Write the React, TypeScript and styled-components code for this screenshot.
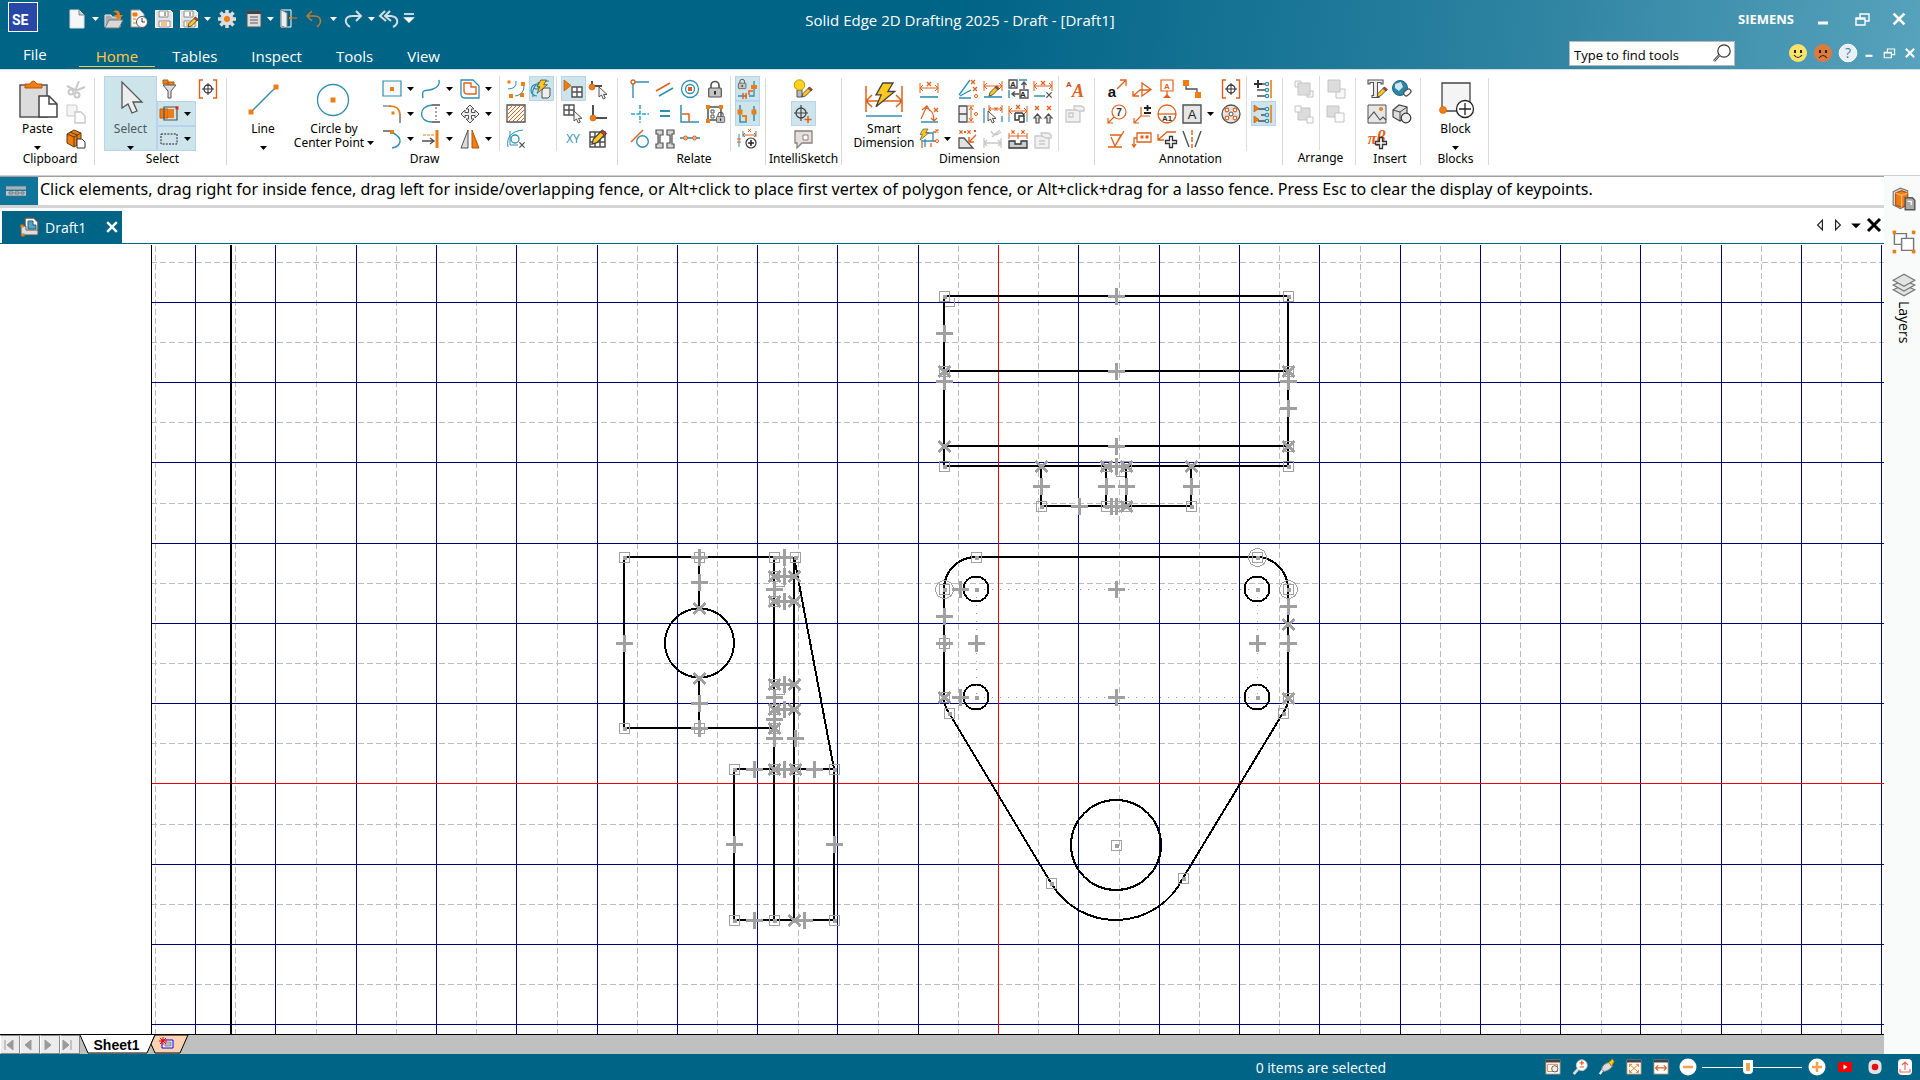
import React from "react";
import styled, { createGlobalStyle } from "styled-components";

const B = "#2f8fb3";
const O = "#e0601a";
const F = "#ee7d12";
const G = "#505050";
const L = "#c9c9c9";
const NAVY = "#00007f";
const MARK = "#a0a0a0";
const TEAL = "#006487";

const GlobalStyle = createGlobalStyle`
  * { box-sizing: border-box; }
  body { margin: 0; background: #fff; font-family: "Open Sans", "Noto Sans", sans-serif; font-size: 12px; color: #000; }
  button, input { font: inherit; color: inherit; }
`;

/* ---------- icons, drawn on a 20 x 20 field ---------- */

const dims = (y: number, x1 = 1, x2 = 19) => (
  <g stroke={O} fill="none">
    <path d={`M${x1} ${y - 5}v10M${x2} ${y - 5}v10M${x1} ${y}H${x2}M${x1 + 3} ${y - 3}l-3 3 3 3M${x2 - 3} ${y - 3}l3 3-3 3`} />
  </g>
);
const ex = (x: number, y: number, c = O, r = 2) => (
  <path d={`M${x - r} ${y - r}l${2 * r} ${2 * r}M${x + r} ${y - r}l${-2 * r} ${2 * r}`} stroke={c} strokeWidth="1.3" fill="none" />
);
const sq = (x: number, y: number, s = 4, c = F) => <rect x={x - s / 2} y={y - s / 2} width={s} height={s} fill={c} />;
const dot = (x: number, y: number, r = 2.4) => <circle cx={x} cy={y} r={r} fill={F} stroke={O} strokeWidth=".7" />;
const bolt = (x: number, y: number, k = 1) => (
  <path transform={`translate(${x} ${y}) scale(${k})`} d="M4 0h6L7 5h4L0 14l3-7H0z" fill="#ffc81e" stroke="#444" strokeWidth=".8" />
);
const cursor = (x: number, y: number) => (
  <path transform={`translate(${x} ${y})`} d="M0 0v10l2.5-2 1.8 4 2-1-1.8-3.6H8z" fill="#f4f4f4" stroke={G} />
);
const pencil = (x: number, y: number) => (
  <g transform={`translate(${x} ${y})`}>
    <path d="M0 10l1-3.5L7 .5l2.5 2.5-6 6z" fill="#ffc81e" stroke="#444" strokeWidth=".9" />
    <path d="M6 1.5L7.5 0l3 2.5L9 4z" fill="#c83a2a" stroke="#444" strokeWidth=".7" />
  </g>
);
const lock = (x: number, y: number, k = 1) => (
  <g transform={`translate(${x} ${y}) scale(${k})`}>
    <path d="M3 7V4.500a4 4 0 0 1 8 0V7" fill="none" stroke={G} strokeWidth="1.6" />
    <rect x=".7" y="7" width="12.600" height="9" rx="1" fill="#c4c4c4" stroke={G} strokeWidth="1.2" />
    <path d="M7 10v3.500" stroke="#222" strokeWidth="1.8" />
  </g>
);
const plus = (x: number, y: number) => (
  <path transform={`translate(${x} ${y})`} d="M-1.500-5.500h3v4h4v3h-4v4h-3v-4h-4v-3h4z" fill="#fff" stroke="#333" strokeWidth="1.3" />
);
const letter = (x: number, y: number, s: string, size = 9, c = "#222", extra: object = {}) => (
  <text x={x} y={y} fontSize={size} fill={c} textAnchor="middle" fontFamily="Liberation Sans, sans-serif" fontWeight="bold" {...extra}>{s}</text>
);
const gridBox = (x: number, y: number, s: number) => (
  <path d={`M${x} ${y}h${s}v${s}h${-s}zM${x + s / 2} ${y}v${s}M${x} ${y + s / 2}h${s}`} fill="#fff" stroke={G} strokeWidth="1.4" />
);
const brackets = (
  <>
    <path d="M5 1H1.500v18H5M15 1h3.500v18H15" fill="none" stroke={O} strokeWidth="1.4" />
    <path d="M10 4v12M4 10h12" stroke="#333" />
    <circle cx="10" cy="10" r="4" fill="none" stroke="#333" strokeWidth="1.3" />
  </>
);
const floppy = (
  <>
    <path d="M1.500 1.500h15l2 2v15h-17z" fill="#e4e4e4" stroke="#fff" />
    <path d="M5 2h9v6H5zM5 12h11v6H5z" fill="#fff" stroke="#8a8a8a" />
    <path d="M7 14h6M7 16h6" stroke={F} /><path d="M11 3v4" stroke="#555" />
  </>
);
const face = (c: string, mouth: string) => (
  <>
    <circle cx="10" cy="10" r="9" fill={c} />
    <path d="M7 7v3M13 7v3" stroke="#222" strokeWidth="2" />
    <path d={mouth} fill="none" stroke="#222" strokeWidth="1.200" />
  </>
);

const icons: Record<string, React.ReactNode> = {
  newDoc: <><path d="M3 1h9l5 5v13H3z" fill="#f6f6f6" stroke="#ddd" /><path d="M12 1v5h5" fill="#ccc" stroke="#888" /></>,
  open: <><path d="M1 18V6h6l1 2h8v10z" fill="#aaa" stroke="#eee" /><path d="M1 19l4-8h14l-4 8z" fill="#d8d8d8" stroke="#777" /><path d="M9 3c4-3 7-1 7 3h3l-4.500 5L10 6h3c0-2-1-3-4-3z" fill={F} /></>,
  recent: <><path d="M2 1h9l4 4v13H2z" fill="#f3f3f3" stroke="#999" /><path d="M4 4h4v3H4zM4 10h3M4 14h3" fill={F} stroke={F} /><circle cx="13" cy="13" r="5.500" fill="#fff" stroke="#555" /><path d="M13 9v4h3" fill="none" stroke="#333" /></>,
  save: floppy,
  saveAs: <>{floppy}{pencil(9, 8)}</>,
  gear: <><path d="M10 1v18M1 10h18M3.500 3.500l13 13M16.500 3.500l-13 13" stroke="#ddd" strokeWidth="3.500" /><circle cx="10" cy="10" r="6.500" fill="#ddd" /><circle cx="10" cy="10" r="3" fill={F} /></>,
  windows: <><path d="M3 2h14v16H3z" fill="#ddd" stroke="#555" /><path d="M3 2h14v3H3z" fill="#444" /><path d="M6 8h8M6 11h8M6 14h8" stroke="#888" strokeWidth="1.500" /></>,
  door: <><path d="M3 1h10v17H3z" fill="none" stroke="#fff" /><path d="M3 1l6 3v15l-6-2z" fill="#eee" stroke="#888" /><path d="M19 9h-8M14 6l-3 3 3 3" stroke={F} fill="none" /></>,
  undo: <path d="M7 2L2 7l5 5M2 7h7c8 0 8 7 3 11" fill="none" stroke="#b97a35" strokeWidth="1.600" />,
  redo: <path d="M13 2l5 5-5 5M18 7h-8C1 7 1 14 7 18" fill="none" stroke="#d5dde0" strokeWidth="2" />,
  undoAll: <path d="M6 2L1 7l6 5M11 2L6 7l6 5M6 7h6c8 1 8 8 2 11" fill="none" stroke="#d5dde0" strokeWidth="2" />,
  custom: <path d="M5 5h10M6 9h8l-4 4z" fill="#fff" stroke="#fff" strokeWidth="1.500" />,

  cut: <g fill="none" stroke={L} strokeWidth="2"><path d="M9 12L13 2M9 11L1 7M9 12l10-4" /><circle cx="5" cy="13" r="2.500" /><circle cx="11" cy="16" r="2.500" /></g>,
  copy: <><path d="M1 1h9l1 1v10H1z" fill="#f4f4f4" stroke={L} /><path d="M9 8h6l4 4v7H9z" fill="#fff" stroke={L} strokeWidth="1.400" /></>,
  pasteSpecial: <><path d="M1 5l7-4 7 3v10l-7 4-7-4z" fill={F} stroke="#5a3c12" /><path d="M1 5l7 3 7-4M8 8v10M4 3l7 3v10" fill="none" stroke="#5a3c12" /><path d="M11 10h5l3 3v6h-8z" fill="#fff" stroke="#333" /></>,
  filter: <><path d="M4 1h5v4H4zM9 3h6v4H9z" fill={F} stroke="#b05c0a" /><path d="M4 6h13l-5 6v7H9v-7z" fill="#ddd" stroke="#555" /></>,
  fence: <><path d="M1 5h8v9H1z" fill={F} stroke="#c05c10" /><path d="M9 5h6v9H9z" fill={F} /><path d="M5 3h13v13H5z" fill="none" stroke={G} strokeWidth="1.200" />{sq(18, 4, 3, "#e22")}</>,
  box: <path d="M2 5h16v10H2z" fill="none" stroke="#222" strokeDasharray="2 1.200" />,
  brackets,
  rect: <><path d="M1 2h18v15H1z" fill="#f7fbfd" stroke={B} strokeWidth="1.200" />{sq(10, 10, 4)}</>,
  curve: <path d="M2 19C0 8 6 13 12 10c5-2 7-5 6-9" fill="none" stroke={B} strokeWidth="1.400" />,
  offset: <><path d="M1 1h12l6 6v12H5q-4 0-4-4z" fill="none" stroke={B} strokeWidth="1.300" /><path d="M4 4h7v4h5v7H8q-4 0-4-3z" fill="none" stroke={O} strokeWidth="1.400" /></>,
  fillet: <><path d="M1 2h8M18 10v9" stroke={G} strokeWidth="1.200" /><path d="M7 2c8 0 11 4 11 9" fill="none" stroke={F} strokeWidth="1.600" />{sq(11, 9, 3)}</>,
  trim: <><path d="M11 1C-3 2-3 18 11 18" fill="none" stroke={B} strokeWidth="1.400" /><path d="M11 1h8M11 18h8" stroke={G} strokeWidth="1.400" /><path d="M15 3v13" stroke="#444" strokeDasharray="2 2" /></>,
  move: <path d="M10 1l4 4h-2.500v3.500H15V6l4 4-4 4v-2.500h-3.500V15H14l-4 4-4-4h2.500v-3.500H5V14l-4-4 4-4v2.500h3.500V5H6z" fill="#eee" stroke={G} />,
  arc: <><path d="M1 2h9" stroke={G} strokeWidth="1.400" />{sq(10, 3, 4)}<path d="M11 4c10 5 9 13-1 15" fill="none" stroke={B} strokeWidth="1.400" /></>,
  extend: <><path d="M16 1v18" stroke={F} strokeWidth="3" /><path d="M2 6h11" stroke={F} strokeDasharray="3 1" /><path d="M1 12h12M9 9l4 3-4 3" stroke={G} fill="none" strokeWidth="1.300" /></>,
  mirror: <><path d="M8 1v18H1z" fill="#ddd" stroke={G} /><path d="M12 1v18h7z" fill={F} stroke="#b5560a" /></>,
  nodes: <><path d="M2 10q9 0 8-8M9 17q9-1 9-10" fill="none" stroke={B} />{sq(3, 3, 3)}{sq(17, 5)}{sq(5, 17)}{sq(16, 16)}</>,
  autoConstrain: <><path d="M2 18C0 8 6 2 18 2M3 9q6 4 4-6M6 17a6 6 0 0 1 0-12" fill="none" stroke={B} strokeWidth="1.200" /><path d="M11 11l2-2h6v8l-2 2h-6z" fill="#eee" stroke={G} />{bolt(6, 1, 0.95)}</>,
  hatch: <><path d="M1 1h18v17H1z" fill="#fff" stroke={G} strokeWidth="1.300" /><path d="M2 6l4-4M2 10l8-8M2 14l12-12M2 18L18 2M7 17L18 6M11 17l7-7M15 17l3-3" stroke={O} /></>,
  clean: <><circle cx="9" cy="10" r="4" fill="none" stroke={B} strokeWidth="1.300" /><path d="M2 18C0 8 6 2 17 1M4 2v14h8" fill="none" stroke={B} />{ex(16, 16, G, 2.6)}</>,
  gridOn: <><path d="M1 1v11l7-5.500z" fill={F} stroke="#b5560a" strokeWidth=".7" />{gridBox(9, 8, 10)}</>,
  snapCursor: <><path d="M4 2v5h10" fill="none" stroke={G} strokeWidth="2" />{dot(4, 8, 3)}{cursor(11, 8)}</>,
  gridCursor: <>{gridBox(1, 1, 10)}{cursor(11, 7)}</>,
  origin: <><path d="M5 1v13h14" fill="none" stroke={G} strokeWidth="2" />{dot(5, 14, 3)}</>,
  xy: <text x="10" y="14" textAnchor="middle" fontSize="12" fill={B} fontFamily="Open Sans, sans-serif">XY</text>,
  gridEdit: <><path d="M2 3h15v15H2zM7 3v15M12 3v15M2 8h15M2 13h15" fill="#fff" stroke={G} strokeWidth="1.500" /><g transform="translate(4 1) scale(1.4)">{pencil(0, 0)}</g></>,
  connect: <><path d="M3 3v16M4 3h15" stroke={B} strokeWidth="1.400" /><circle cx="3" cy="3" r="2" fill="#fff" stroke={O} strokeWidth="1.400" /></>,
  parallel: <><path d="M1 12L15 4" stroke={O} strokeWidth="1.500" /><path d="M4 17L18 9" stroke={B} strokeWidth="1.500" /></>,
  concentric: <><circle cx="10" cy="10" r="8.500" fill="none" stroke={B} strokeWidth="1.300" /><circle cx="10" cy="10" r="4.500" fill="none" stroke={B} strokeWidth="1.300" />{sq(10, 10, 4, O)}</>,
  lock: lock(3, 2, 1),
  horVert: <path d="M10 1v18M1 10h18" stroke="#23a8cc" strokeWidth="1.500" strokeDasharray="4 1.500" />,
  equal: <path d="M5 7h10M5 12h10" stroke={B} strokeWidth="2" />,
  perp: <><path d="M1 1v17h18" fill="none" stroke={B} strokeWidth="1.500" /><path d="M2 10h7v8" fill="none" stroke={O} strokeWidth="1.500" /></>,
  rigid: <><path d="M3 3h13v13H3z" fill="none" stroke={G} strokeWidth="1.500" /><path d="M6 6h3v3H6zM6 11h3v3H6z" fill="none" stroke={G} />{sq(3, 3)}{sq(16, 3)}{sq(3, 17)}{lock(11, 8, 0.65)}</>,
  tangent: <><circle cx="12.500" cy="12.500" r="5.800" fill="none" stroke={B} strokeWidth="1.400" /><path d="M1 13L13 1" stroke={O} strokeWidth="1.500" /></>,
  symmetric: <path d="M1 1h7v5H5v8h3v5H1v-4h2V5H1zM19 1h-7v5h3v8h-3v5h7v-4h-2V5h2z" fill="#d5d5d5" stroke={G} strokeWidth="1.200" />,
  collinear: <><path d="M0 9h20" stroke={B} strokeWidth="1.600" /><circle cx="5.500" cy="9" r="2" fill="#f8b38a" stroke={O} /><circle cx="14.500" cy="9" r="2" fill="#f8b38a" stroke={O} /></>,
  maintain: <>{lock(1, 0, 0.6)}<path d="M12 17h5V2M1 17h9" fill="none" stroke={B} strokeWidth="1.300" /><path d="M6 14v6M9 14v6M12 16v-4h4" stroke={O} strokeWidth="1.500" fill="none" /><path d="M14 8h6" stroke={F} strokeWidth="4" /></>,
  handles: <><path d="M3 1v17h7M17 2v15" fill="none" stroke={B} strokeWidth="1.500" />{sq(3, 8, 5)}{sq(17, 8, 5)}<path d="M5 12h4v5" stroke={F} strokeWidth="2" fill="none" /></>,
  relAssist: <><path d="M2 5v13M6 2v6M19 2v6" stroke={B} /><path d="M0 10h4M0 13h4M6 6h13M8 4L6 6l2 2M17 4l2 2-2 2M11 0l3 3M14 0l-3 3" stroke={O} fill="none" /><circle cx="14" cy="14" r="5" fill="#fff" stroke="#333" strokeWidth="1.200" /><path d="M14 11v6M11 14h6" stroke="#222" strokeWidth="1.500" /></>,
  bulb: <><path d="M4 11h5v7H4z" fill="#bbb" stroke={G} /><circle cx="6.500" cy="6" r="5.200" fill="#ffd21e" stroke="#c79400" />{pencil(9, 8)}</>,
  target: <><circle cx="8" cy="9" r="5" fill="none" stroke="#444" strokeWidth="1.300" /><path d="M8 1v16M1 9h14" stroke="#444" strokeWidth="1.200" /><path d="M15 12v7M11.500 15.500h7" stroke={O} strokeWidth="1.500" /></>,
  note: <><path d="M2 2h17v12H9l-5 5v-5H2z" fill="#e3dfdd" stroke="#8d7f7a" strokeWidth="1.300" /><path d="M10 6h5v5h-5z" fill="#fff" stroke="#8d7f7a" /></>,
  distance: <>{dims(9)}{ex(10, 5)}<path d="M1 18h18" stroke={B} strokeWidth="1.600" /></>,
  angle: <><path d="M2 18h17" stroke={B} strokeWidth="1.500" /><path d="M2 15L8 2M3 6l5-4 3 5M7 4q8 2 8 13M12 14l3 3 3-3" fill="none" stroke={O} strokeWidth="1.200" />{ex(17, 6)}</>,
  autoDim: <><path d="M2 12h12V4h-8M6 10v8" fill="none" stroke={B} strokeWidth="1.300" /><path d="M14 3h3M14 12h3M3 13v6M12 14v4" stroke={O} strokeWidth="1.300" />{bolt(1, 0, 0.8)}{ex(18, 2, O, 1.5)}<circle cx="18" cy="12" r="1.500" fill="none" stroke={O} /></>,
  rays: <><path d="M1 16L12 1M2 17l11-6M1 19h12" stroke={B} strokeWidth="1.300" />{ex(15, 3)}{ex(17, 10)}<circle cx="18" cy="17" r="1.500" fill="none" stroke={O} /></>,
  dimEdit: <>{dims(7)}<path d="M1 18h18" stroke={B} strokeWidth="1.600" />{pencil(6, 7)}</>,
  dimLetters: <><path d="M1 1h8v8H1zM12 11h8v8h-8z" fill="#fff" stroke={G} strokeWidth="1.300" />{letter(5, 8, "A", 8)}{letter(15, 18, "A", 8)}<path d="M1 11v8M11 1h8" stroke={B} strokeWidth="1.400" /><path d="M16 10V4M13.500 6L16 3l2.500 3M11 15H5M7 12.500L4 15l3 2.500" fill="none" stroke={G} strokeWidth="1.400" /></>,
  dimRemove: <>{dims(7)}{ex(10, 4)}<path d="M1 17h11" stroke={B} strokeWidth="1.500" />{ex(16, 16, G, 2.6)}</>,
  coord: <><path d="M1 2h8v16H1zM1 10h8" fill="#eee" stroke={G} strokeWidth="1.300" /><path d="M10 2h6M10 18h6M13 3v14M11 6l2-3 2 3M11 14l2 3 2-3" stroke={O} fill="none" /><circle cx="18" cy="10" r="1.500" fill="none" stroke={O} /></>,
  dimCursor: <><path d="M1 4v15M19 12v6" stroke={B} strokeWidth="1.300" /><g stroke={O} fill="none"><path d="M6 1v8M19 1v8M6 5h13M8 3L6 5l2 2M17 3l2 2-2 2" /></g>{cursor(5, 7)}{ex(13, 5, O, 1.5)}</>,
  dimCopy: <>{dims(7)}{ex(10, 3)}<path d="M1 12v6M19 12v6" stroke={B} /><path d="M7 9h7l2 2v7h-5" fill="#fff" stroke="#333" strokeWidth="1.400" /><path d="M7 9v7h4v-4h5" fill="none" stroke="#333" strokeWidth="1.400" /></>,
  arrowsUp: <>{ex(4, 4)}{ex(16, 4)}<path d="M3 19v-5H1L4.500 10 8 14H6v5zM14 19v-5h-2l3.500-4 3.500 4h-2v5z" fill="#ddd" stroke={G} strokeWidth="1.200" /></>,
  chamfer: <><path d="M1 9h5l9 10H1z" fill="#e2e2e2" stroke={G} strokeWidth="1.300" />{ex(3, 3, O, 1.6)}{ex(11, 3, O, 1.6)}<path d="M18 6l-7 7M11 8v5h5" stroke={O} fill="none" strokeWidth="1.400" />{sq(17, 2, 2, O)}{sq(7, 3, 2, O)}</>,
  dimGrey: <g stroke={L} fill="none" strokeWidth="1.300"><path d="M1 9v10M18 9v10M1 14h17M4 11l-3 3 3 3M15 11l3 3-3 3M8 2q3 7 10 1M9 8l8-7" /></g>,
  stack: <><g stroke={O} fill="none"><path d="M1 4v6M10 4v6M19 4v6M1 7h18" /></g>{ex(5, 3, O, 1.6)}{ex(15, 3, O, 1.6)}<path d="M1 12h6v3h6v-3h6v7H1z" fill="#ccc" stroke="#333" strokeWidth="1.300" /></>,
  props: <g fill="#f1f1f1" stroke={L} strokeWidth="1.300"><path d="M2 7h14v12H2z" /><path d="M6 12h6M6 15h6M8 4h7q4 1 3 5h-5l-4-2z" /></g>,
  textStyle: <>{letter(4, 8, "A", 8, "#c8401a")}{letter(13, 18, "A", 18, O, { fontStyle: "italic", fontFamily: "Liberation Serif, serif" })}</>,
  propsGrey: <g fill="#f1f1f1" stroke={L} strokeWidth="1.300"><path d="M1 6h14v12H1z" /><path d="M4 9h4v4H4zM9 2h7q4 1 3 5h-5l-5-2z" /></g>,

  callout: <>{letter(5, 18, "a", 15, "#111")}<path d="M10 10l8-8M13 1h6v6" fill="none" stroke={O} strokeWidth="1.300" /></>,
  weld: <path d="M1 17l7-6h11M1 12v5h6M10 4v13l9-6.500z" fill="none" stroke={O} strokeWidth="1.300" />,
  datum: <><path d="M4 1h12v11H4zM10 12v6" fill="none" stroke={O} strokeWidth="1.200" />{letter(10, 10, "A", 8, O)}<path d="M6 19h8l-4-4z" fill={O} /></>,
  connector: <><path d="M4 4v6h11v6" fill="none" stroke={G} strokeWidth="1.300" />{sq(4, 4, 6)}{sq(16, 16, 6)}</>,
  balloon: <><circle cx="12" cy="8" r="7" fill="none" stroke={O} strokeWidth="1.200" />{letter(12, 12, "7", 10, "#333")}<path d="M7 13l-6 6M1 14v5h5" fill="none" stroke={O} strokeWidth="1.200" /></>,
  tolerance: <><path d="M9 3v9H18M9 12l-7 7M2 14v5h5" fill="none" stroke={O} strokeWidth="1.200" /><path d="M12 4h7M15.500 1v6M12 9h7" stroke="#222" strokeWidth="1.800" /></>,
  datumTarget: <><circle cx="10" cy="10" r="9" fill="none" stroke={O} strokeWidth="1.300" /><path d="M1 10h18" stroke={O} strokeWidth="1.300" />{letter(10, 17, "A1", 8, "#333")}</>,
  textBox: <><path d="M1 1h18v18H1z" fill="#e6e6e6" stroke={G} strokeWidth="1.400" />{letter(10, 15, "A", 13, "#222", { fontWeight: "normal" })}</>,
  bolts: <><circle cx="10" cy="10" r="9" fill="#e4e4e4" stroke={G} strokeWidth="1.300" /><circle cx="10" cy="10" r="2" fill="#fff" stroke={G} /><g fill="#fff" stroke={O} strokeWidth="1.200"><circle cx="6" cy="6" r="1.800" /><circle cx="14" cy="6" r="1.800" /><circle cx="6" cy="14" r="1.800" /><circle cx="14" cy="14" r="1.800" /></g></>,
  surface: <path d="M3 6h11L8 17 4 8M8 17l9-15M1 18h14" fill="none" stroke={O} strokeWidth="1.300" />,
  frame: <><path d="M5 4h14v9H5zM5 9H2v9M0 15l2 3 2-3" fill="none" stroke={O} strokeWidth="1.300" />{sq(10, 8, 3, O)}{sq(15, 8, 3, O)}</>,
  leader: <><path d="M19 3h-9l-9 8M1 5v6h6" fill="none" stroke={O} strokeWidth="1.300" />{plus(14, 13)}</>,
  centerline: <><path d="M1 2l6 16M19 2l-6 16" stroke={G} strokeWidth="1.400" /><path d="M10 1v18" stroke={O} strokeWidth="1.400" strokeDasharray="5 2" /></>,
  alignAdd: <><path d="M18 1v18" stroke={F} strokeWidth="1.600" /><path d="M7 5h6M4 11h9M4 17h9" stroke={G} strokeWidth="1.400" /><path d="M5 1v8M1 5h8" stroke="#333" strokeWidth="2" /><g fill="#fff" stroke={B} strokeWidth="1.300"><circle cx="14" cy="5" r="1.600" /><circle cx="14" cy="11" r="1.600" /><circle cx="14" cy="17" r="1.600" /></g></>,
  alignOn: <><path d="M18 1v18" stroke={F} strokeWidth="1.600" /><path d="M5 5h8M8 11h5M5 17h8" stroke={G} strokeWidth="1.400" /><path d="M1 1v7l5-3.500zM1 12v7l5-3.500z" fill={F} stroke="#b5560a" strokeWidth=".6" /><g fill="#fff" stroke={B} strokeWidth="1.300"><circle cx="14" cy="5" r="1.600" /><circle cx="14" cy="11" r="1.600" /><circle cx="14" cy="17" r="1.600" /></g></>,
  front: <g stroke="#c4c4c4" fill="#f7f7f7"><path d="M1 2h6v6H1zM13 12h6v6h-6z" /><path d="M4 4h12v12H4z" fill="#dcdcdc" /></g>,
  back: <g stroke="#c4c4c4" fill="#fbfbfb"><path d="M4 4h12v12H4z" fill="#dcdcdc" /><path d="M1 2h6v6H1zM13 13h6v6h-6z" /></g>,
  forward: <g stroke="#c4c4c4" fill="#f7f7f7"><path d="M10 10h9v9h-9z" /><path d="M2 1h12v12H2z" fill="#dcdcdc" /></g>,
  backward: <g stroke="#c4c4c4" fill="#fbfbfb"><path d="M1 2h12v11H1z" fill="#dcdcdc" /><path d="M9 9h9v9H9z" /></g>,
  textTool: <><path d="M1 1h15v4h-2V3.500H10.500v13H12v2H5v-2h1.500v-13H3V5H1z" fill="#eee" stroke={G} strokeWidth="1.100" />{pencil(10, 8)}</>,
  web: <><circle cx="8" cy="9" r="7.500" fill="#2b86a8" stroke="#1e6683" /><path d="M3 5l6-2 2 5-4 4-4-3zM11 12l4-4" fill="#cfe8ef" /><rect x="11" y="11" width="8" height="5" rx="2.500" fill="#fff" stroke={G} strokeWidth="1.200" transform="rotate(-40 15 13)" /></>,
  image: <><path d="M1 1h18v18H1z" fill="#e6e6e6" stroke={G} /><path d="M1 15l6-7 6 8 3-3 3 3" fill="none" stroke={G} strokeWidth="1.100" /><circle cx="14" cy="5" r="2" fill={F} /></>,
  object: <><path d="M1 6l6-5 8 2v10l-7 4-7-4z" fill="#ddd" stroke="#444" strokeWidth="1.200" /><path d="M1 6l7 2 7-5M8 8v9" fill="none" stroke="#444" /><circle cx="14" cy="14" r="4.800" fill="#eee" stroke="#333" strokeWidth="1.200" /></>,
  symbol: <>{letter(5, 15, "π", 16, O, { fontStyle: "italic", fontFamily: "Liberation Serif, serif" })}{letter(14, 13, "β", 17, O, { fontStyle: "italic", fontFamily: "Liberation Serif, serif" })}{plus(14, 14)}</>,

  happy: face("#fae26b", "M6 12q4 5 8 0"),
  sad: face("#e07a3c", "M6 15q4-5 8 0"),
  help: <><circle cx="10" cy="10" r="8.800" fill="#e9f0f3" stroke="#fff" /><text x="10" y="15" fontSize="14" textAnchor="middle" fill="#2f87a8" fontFamily="Open Sans, sans-serif">?</text></>,
  search: <g fill="none" stroke="#333"><circle cx="12" cy="8" r="6.200" strokeWidth="1.200" /><path d="M7.500 12L2 18" strokeWidth="2.500" /><path d="M7.500 12L2 18" stroke="#fff" strokeWidth=".8" /></g>,
  draft: <><path d="M5 1h9l4 4v9H5z" fill="#fff" stroke="#555" strokeWidth="1.500" /><path d="M8 4h5v4h3v4H8z" fill="#4fa6c6" stroke="#1c5d78" /><path d="M1 9h5v4h12v5H1z" fill="#ddd" stroke="#555" />{sq(2, 9, 3)}{sq(3, 18, 3)}</>,
  min: <path d="M5 14h10" stroke="#fff" strokeWidth="3" />,
  restore: <path d="M8 9V5h9v7h-4M4 9h9v7H4zM4 10h9" fill="none" stroke="#fff" strokeWidth="1.400" />,
  close: <path d="M4 4l12 12M16 4L4 16" stroke="currentColor" strokeWidth="3" />,
  prev: <path d="M13 4v12l-6-6z" fill="#fff" stroke="#222" strokeWidth="1.500" />,
  next: <path d="M7 4v12l6-6z" fill="#fff" stroke="#222" strokeWidth="1.500" />,
  more: <path d="M4 8h12l-6 6z" fill="#000" />,
  bar: <><path d="M0 5h20v4H0z" fill="#9db7c0" /><path d="M0 10h20v5H0z" fill="#b9c8ce" /><path d="M0 5h20M0 9h20M0 15h20" stroke="#4d6973" strokeWidth=".7" /><path d="M3 11h4v2H3zM9 11h4v2H9zM15 11h3v2h-3z" fill="none" stroke="#667" strokeWidth=".8" /></>,

  library: <><path d="M1 4l6-3 6 2v12l-6 3-6-3z" fill="#ddd" stroke="#777" /><path d="M3 5l5-2 5 2v10l-5 2-5-2z" fill={F} stroke="#b5560a" /><path d="M3 5l5 2 5-2M8 7v10" fill="none" stroke="#fbb46a" /><path d="M11 9h6l2 2v8h-8z" fill="#aaa" stroke="#555" strokeWidth="1.200" /><path d="M13 12h3v3" fill="none" stroke="#fff" /></>,
  groups: <><path d="M2 3h10v9H2z" fill="#fff" stroke="#777" strokeWidth="1.200" /><path d="M8 7h10v10H8z" fill="#fff" stroke="#777" strokeWidth="1.200" />{sq(2, 2, 3)}{sq(18, 2, 3)}{sq(2, 18, 3)}{sq(18, 18, 3)}</>,
  layers: <g fill="#e2e2e2" stroke="#777"><path d="M1 14l9-4 9 4-9 5z" /><path d="M1 10l9-4 9 4-9 5z" /><path d="M1 6l9-5 9 5-9 5z" /></g>,

  zoomArea: <><path d="M2 2h16v16H2z" fill="#fff" stroke="#777" /><path d="M2 2h16v3H2z" fill="#444" /><path d="M4 7h11v8H4z" fill="none" stroke={F} /><circle cx="12" cy="12" r="3.500" fill="#eee" stroke="#555" /></>,
  zoomPm: <><circle cx="12" cy="8" r="6" fill="#fff" stroke="#ccc" /><path d="M8 12l-5 6" stroke="#ddd" strokeWidth="3" /><path d="M12 3v5M9.500 5.500h5M9.500 10h5" stroke={O} strokeWidth="1.300" /></>,
  brush: <><path d="M2 18l4-6" stroke="#eee" strokeWidth="2.500" /><path d="M4 13q1-7 9-8l3 4q-3 5-9 6z" fill="#ddd" stroke="#888" /><path d="M12 5l4-4 2 3-3 5z" fill="#ffc81e" stroke="#a87c00" /></>,
  fit: <><path d="M2 2h16v16H2z" fill="#fff" stroke="#777" /><path d="M2 2h16v3H2z" fill="#444" /><path d="M5 7l10 9M15 7L5 16M5 10V7h3M12 7h3v3M5 13v3h3M15 13v3h-3" fill="none" stroke={F} /></>,
  pan: <><path d="M2 2h16v16H2z" fill="#fff" stroke="#777" /><path d="M2 2h16v3H2z" fill="#444" /><path d="M4 11h12M7 8l-3 3 3 3M13 8l3 3-3 3" fill="none" stroke={O} strokeWidth="1.300" /></>,
  minus: <><circle cx="10" cy="10" r="8.500" fill="#fff" /><path d="M5 10h10" stroke="#f0a154" strokeWidth="2.500" /></>,
  plusRound: <><circle cx="10" cy="10" r="8.500" fill="#fff" /><path d="M5 10h10M10 5v10" stroke="#f0a154" strokeWidth="2.500" /></>,
  video: <><rect x="3" y="5" width="14" height="10" rx="1.500" fill="#f40000" /><path d="M8.500 7.500v5l4-2.500z" fill="#fff" /></>,
  record: <><rect x="3.500" y="3" width="13" height="14" rx="5" fill="#e2e2e2" /><circle cx="10" cy="10" r="3.300" fill="#e01010" /></>,
  upload: <><rect x="3" y="2" width="14" height="16" rx="4" fill="#fff" /><path d="M10 13V5M7 8l3-3 3 3M5 12v3h10v-3" fill="none" stroke="#e8685f" strokeWidth="1.200" /></>,
};

const IconSvg = styled.svg`
  flex: none;
  overflow: visible;
`;
const Icon = ({ name, size = 20 }: { name: string; size?: number }) => (
  <IconSvg width={size} height={size} viewBox="0 0 20 20" aria-hidden="true">{icons[name]}</IconSvg>
);
const Caret = ({ color = "#000" }: { color?: string }) => (
  <svg width="7" height="4" viewBox="0 0 7 4" aria-hidden="true"><path d="M0 0h7L3.500 4z" fill={color} /></svg>
);

/* ---------- shell ---------- */

const Shell = styled.div`
  display: flex;
  flex-direction: column;
  height: 100vh;
  overflow: hidden;
`;
const Header = styled.header`
  display: flex;
  justify-content: space-between;
  height: 70px;
  flex: none;
  color: #fff;
  border-bottom: 1px solid #d5dcde;
  background: linear-gradient(97deg, ${TEAL} 50%, #2b81a0 78%, #57a2bc 100%);
`;
const HeaderLeft = styled.div`
  display: flex;
  flex-direction: column;
  flex: 1;
`;
const HeaderRight = styled(HeaderLeft)`
  align-items: flex-end;
`;
const QuickBar = styled.div`
  display: flex;
  align-items: center;
  height: 37px;
  padding-left: 8px;
`;
const Logo = styled.div`
  width: 30px;
  height: 30px;
  margin: 0 26px 4px 0;
  padding: 7px 0 0 3px;
  border: 1px solid #fff;
  background: #2748a8;
  font: bold 14px/20px "Roboto", sans-serif;
`;
const PlainButton = styled.button<{ $w?: number }>`
  display: flex;
  align-items: center;
  justify-content: center;
  width: ${(p) => p.$w ?? 25}px;
  height: 25px;
  flex: none;
  padding: 0;
  border: 0;
  background: none;
`;
const AppTitle = styled.h1`
  margin: 10px 0 0;
  font-size: 15px;
  font-weight: normal;
  line-height: 20px;
  white-space: nowrap;
`;
const Tabs = styled.nav`
  display: flex;
  align-items: flex-end;
  height: 30px;
  padding-left: 6px;
`;
const TabButton = styled.button<{ $active?: boolean; $file?: boolean }>`
  height: 24px;
  margin-bottom: ${(p) => (p.$file ? 2 : 0)}px;
  margin-right: ${(p) => (p.$file ? 15 : 0)}px;
  padding: 2px 17px 0;
  border: 0;
  border-bottom: 1px solid ${(p) => (p.$active ? "#ffc845" : "transparent")};
  background: none;
  color: ${(p) => (p.$active ? "#ffc845" : "#fff")};
  font-size: 15px;
  line-height: 20px;
`;
const WindowBar = styled.div`
  display: flex;
  align-items: center;
  height: 38px;
  padding-right: 6px;
`;
const Brand = styled.span`
  margin-right: 13px;
  font-size: 13px;
  font-weight: bold;
`;
const ToolsBar = styled.div`
  display: flex;
  align-items: center;
  height: 30px;
`;
const SearchBox = styled.label`
  display: flex;
  align-items: center;
  width: 166px;
  height: 25px;
  margin-right: 50px;
  padding: 0 2px 0 4px;
  border: 1px solid #b8b8b8;
  background: #fff;
`;
const SearchInput = styled.input`
  flex: 1;
  min-width: 0;
  padding: 3px 0 0;
  border: 0;
  outline: 0;
  background: none;
  font-size: 13px;
  color: #000;
  &::placeholder { color: #000; opacity: 1; }
`;

/* ---------- ribbon ---------- */

const Ribbon = styled.section`
  display: flex;
  flex: none;
  height: 106px;
  border-bottom: 1px solid #cfcfcf;
  font-family: "Noto Sans", "Open Sans", sans-serif;
`;
const GroupBox = styled.div<{ $l: number; $r: number }>`
  display: flex;
  flex-direction: column;
  margin: 8px 0 10px;
  padding: 0 ${(p) => p.$r}px 0 ${(p) => p.$l}px;
  border-right: 1px solid #d9d9d9;
`;
const GroupBody = styled.div`
  display: flex;
  height: 75px;
  margin: -2px 0 1px;
  justify-content: center;
`;
const GroupName = styled.div`
  line-height: 14px;
  text-align: center;
`;
const Column = styled.div<{ $wide?: boolean }>`
  width: ${(p) => (p.$wide ? 39 : 25)}px;
  flex: none;
`;
const ToolButton = styled.button<{ $on?: boolean; $menu?: boolean }>`
  display: flex;
  align-items: center;
  width: ${(p) => (p.$menu ? 39 : 25)}px;
  height: 25px;
  padding: 0 0 0 ${(p) => (p.$on ? 1 : 2)}px;
  gap: 5px;
  border: ${(p) => (p.$on ? "1px solid #b9d3ef" : "0")};
  background: ${(p) => (p.$on ? "#cde5ea" : "none")};
`;
const BigButton = styled.button<{ $w: number; $on?: boolean }>`
  display: flex;
  flex-direction: column;
  align-items: center;
  width: ${(p) => p.$w}px;
  height: 75px;
  padding: ${(p) => (p.$on ? 2 : 3)}px 0 0;
  border: ${(p) => (p.$on ? "1px solid #b9d3ef" : "0")};
  background: ${(p) => (p.$on ? "#cde5ea" : "none")};
  color: ${(p) => (p.$on ? "#4c5a5e" : "#000")};
  line-height: 14px;
  white-space: nowrap;
  & > svg + span { margin-top: 3px; }
  & > svg:last-child { margin-top: 10px; }
`;
const Inline = styled.span`
  display: flex;
  align-items: center;
  gap: 3px;
`;
const Divider = styled.i`
  width: 1px;
  margin: 0 4px 0 2px;
  background: #dcdcdc;
`;
const Centered = styled.div`
  display: flex;
  justify-content: center;
  width: 75px;
`;

type Tool = { icon: string; label: string; on?: boolean; menu?: boolean };
const t = (icon: string, label: string, opt: { on?: boolean; menu?: boolean } = {}): Tool => ({ icon, label, ...opt });

const ToolColumn = ({ tools, wide }: { tools: Tool[]; wide?: boolean }) => (
  <Column $wide={wide}>
    {tools.map((x) => (
      <ToolButton key={x.label} $on={x.on} $menu={x.menu} aria-label={x.label} aria-pressed={x.on}>
        <Icon name={x.icon} />
        {x.menu && <Caret />}
      </ToolButton>
    ))}
  </Column>
);
const Group = ({ name, l, r, children }: { name: string; l: number; r: number; children: React.ReactNode }) => (
  <GroupBox $l={l} $r={r}>
    <GroupBody>{children}</GroupBody>
    <GroupName>{name}</GroupName>
  </GroupBox>
);

const menu = { menu: true };
const on = { on: true };

const RibbonBar = () => (
  <Ribbon>
    <Group name="Clipboard" l={11} r={5}>
      <BigButton $w={53}>
        <svg width="40" height="40" viewBox="0 0 40 40" aria-hidden="true">
          <path d="M2 6h27v32H2z" fill="#dcdcdc" stroke="#555" strokeWidth="1.500" />
          <path d="M7 9V5h5q3-6 7 0h5v4z" fill={F} stroke="#b5560a" />
          <path d="M21 17h10l8 8v13H21z" fill="#fff" stroke="#444" strokeWidth="1.500" /><path d="M31 17v8h8" fill="none" stroke="#444" strokeWidth="1.500" />
        </svg>
        <span>Paste</span><Caret />
      </BigButton>
      <ToolColumn tools={[t("cut", "Cut"), t("copy", "Copy"), t("pasteSpecial", "Paste special")]} />
    </Group>
    <Group name="Select" l={9} r={5}>
      <BigButton $w={53} $on>
        <svg width="40" height="40" viewBox="0 0 40 40" aria-hidden="true">
          <path d="M11 3v26l6-4 4 9 5-2-4-9h9z" fill="#eee" stroke="#555" strokeWidth="1.300" />
        </svg>
        <span>Select</span><Caret />
      </BigButton>
      <ToolColumn wide tools={[t("filter", "Selection filter"), t("fence", "Overlapping", { on: true, menu: true }), t("box", "Rectangular fence", { on: true, menu: true })]} />
      <ToolColumn tools={[t("brackets", "Keypoints")]} />
    </Group>
    <Group name="Draw" l={11} r={6}>
      <BigButton $w={50}>
        <svg width="40" height="40" viewBox="0 0 40 40" aria-hidden="true">
          <path d="M8 33L33 8" stroke={B} strokeWidth="1.300" />{sq(8, 33, 5)}{sq(33, 8, 5)}
        </svg>
        <span>Line</span><Caret />
      </BigButton>
      <BigButton $w={92}>
        <svg width="40" height="40" viewBox="0 0 40 40" aria-hidden="true">
          <circle cx="19" cy="21" r="15.500" fill="none" stroke={B} strokeWidth="1.300" />{sq(19, 21, 5)}
        </svg>
        <span>Circle by</span>
        <Inline>Center Point<Caret /></Inline>
      </BigButton>
      <ToolColumn wide tools={[t("rect", "Rectangle", menu), t("fillet", "Fillet", menu), t("arc", "Arc", menu)]} />
      <ToolColumn wide tools={[t("curve", "Curve", menu), t("trim", "Trim", menu), t("extend", "Extend", menu)]} />
      <ToolColumn wide tools={[t("offset", "Offset", menu), t("move", "Move", menu), t("mirror", "Mirror", menu)]} />
      <Divider />
      <ToolColumn tools={[t("nodes", "Convert"), t("hatch", "Fill"), t("clean", "Clean sketch")]} />
      <ToolColumn tools={[t("autoConstrain", "Auto constrain", on)]} />
      <Divider />
      <ToolColumn tools={[t("gridOn", "Show grid", on), t("gridCursor", "Snap to grid"), t("xy", "XY key-in")]} />
      <ToolColumn tools={[t("snapCursor", "Reposition origin"), t("origin", "Zero origin"), t("gridEdit", "Grid options")]} />
    </Group>
    <Group name="Relate" l={10} r={5}>
      <ToolColumn tools={[t("connect", "Connect"), t("horVert", "Horizontal/Vertical"), t("tangent", "Tangent")]} />
      <ToolColumn tools={[t("parallel", "Parallel"), t("equal", "Equal"), t("symmetric", "Symmetric")]} />
      <ToolColumn tools={[t("concentric", "Concentric"), t("perp", "Perpendicular"), t("collinear", "Collinear")]} />
      <ToolColumn tools={[t("lock", "Lock"), t("rigid", "Rigid set")]} />
      <Divider />
      <ToolColumn tools={[t("maintain", "Maintain relationships", on), t("handles", "Relationship handles", on), t("relAssist", "Relationship assistant")]} />
    </Group>
    <Group name="IntelliSketch" l={0} r={0}>
      <Centered>
        <ToolColumn tools={[t("bulb", "IntelliSketch options"), t("target", "Alignment indicator", on), t("note", "Display hints")]} />
      </Centered>
    </Group>
    <Group name="Dimension" l={9} r={6}>
      <BigButton $w={66}>
        <svg width="40" height="40" viewBox="0 0 40 40" aria-hidden="true">
          <path d="M2 7v26M38 7v26M2 22h36M8 16l-6 6 6 6M32 16l6 6-6 6" fill="none" stroke={O} strokeWidth="1.500" />
          <path d="M2 37h36" stroke={B} strokeWidth="1.500" />{bolt(12, 4, 1.7)}
        </svg>
        <span>Smart</span><span>Dimension</span>
      </BigButton>
      <ToolColumn wide tools={[t("distance", "Distance between"), t("angle", "Angle between"), t("autoDim", "Coordinate dimension", menu)]} />
      <ToolColumn tools={[t("rays", "Angular coordinate"), t("coord", "Symmetric diameter"), t("chamfer", "Chamfer dimension")]} />
      <ToolColumn tools={[t("dimEdit", "Edit dimension"), t("dimCursor", "Attach dimension"), t("dimGrey", "Remove jog")]} />
      <ToolColumn tools={[t("dimLetters", "Arrange text"), t("dimCopy", "Copy data"), t("stack", "Line up text")]} />
      <ToolColumn tools={[t("dimRemove", "Remove alignment"), t("arrowsUp", "Retrieve dimensions"), t("props", "Properties")]} />
      <Divider />
      <ToolColumn tools={[t("textStyle", "Styles"), t("propsGrey", "Prefix")]} />
    </Group>
    <Group name="Annotation" l={10} r={6}>
      <ToolColumn tools={[t("callout", "Callout"), t("balloon", "Balloon"), t("surface", "Surface texture")]} />
      <ToolColumn tools={[t("weld", "Weld symbol"), t("tolerance", "Edge condition"), t("frame", "Feature control frame")]} />
      <ToolColumn tools={[t("datum", "Datum frame"), t("datumTarget", "Datum target"), t("leader", "Leader")]} />
      <ToolColumn wide tools={[t("connector", "Connector"), t("textBox", "Text", menu), t("centerline", "Center line")]} />
      <ToolColumn tools={[t("brackets", "Center mark"), t("bolts", "Bolt hole circle")]} />
      <Divider />
      <ToolColumn tools={[t("alignAdd", "Create alignment shape"), t("alignOn", "Show alignment", on)]} />
    </Group>
    <Group name="Arrange" l={9} r={6}>
      <ToolColumn tools={[t("front", "Bring to front"), t("back", "Send to back")]} />
      <Divider />
      <ToolColumn tools={[t("forward", "Pull up"), t("backward", "Push down")]} />
    </Group>
    <Group name="Insert" l={9} r={5}>
      <ToolColumn tools={[t("textTool", "Text profile"), t("image", "Image"), t("symbol", "Symbol")]} />
      <ToolColumn tools={[t("web", "Hyperlink"), t("object", "Object")]} />
    </Group>
    <Group name="Blocks" l={8} r={6}>
      <BigButton $w={53}>
        <svg width="40" height="40" viewBox="0 0 40 40" aria-hidden="true">
          <path d="M6 4h28v28H6z" fill="#f4f4f4" stroke="#444" strokeWidth="1.300" />{dot(7, 31, 3.5)}
          <circle cx="29" cy="30" r="8.500" fill="#fff" stroke="#222" strokeWidth="1.300" /><path d="M29 24v12M23 30h12" stroke="#222" strokeWidth="1.300" />
        </svg>
        <span>Block</span><Caret />
      </BigButton>
    </Group>
  </Ribbon>
);

/* ---------- work area ---------- */

const Work = styled.div`
  display: flex;
  flex: 1;
  min-height: 0;
`;
const Main = styled.main`
  display: flex;
  flex-direction: column;
  flex: 1;
  min-width: 0;
`;
const Prompt = styled.div`
  display: flex;
  height: 32px;
  flex: none;
  border-top: 1px solid #a0a0a0;
  border-bottom: 3px solid #d4d4d4;
`;
const PromptMark = styled.div`
  display: flex;
  align-items: center;
  padding-left: 6px;
  width: 38px;
  flex: none;
  background: #10759a;
`;
const PromptText = styled.p`
  margin: 0;
  padding-left: 2px;
  font-family: "Noto Sans", "Open Sans", sans-serif;
  font-size: 16px;
  line-height: 24px;
  white-space: nowrap;
`;
const DocBar = styled.div`
  display: flex;
  align-items: flex-end;
  justify-content: space-between;
  height: 36px;
  flex: none;
  padding-left: 2px;
  border-bottom: 1px solid ${TEAL};
`;
const DocTab = styled.div`
  display: flex;
  align-items: center;
  height: 32px;
  padding-left: 18px;
  background: ${TEAL};
  color: #fff;
  font-size: 14px;
`;
const DocName = styled.span`
  width: 62px;
  padding-left: 5px;
`;
const DocNav = styled.div`
  display: flex;
  height: 31px;
`;
const Canvas = styled.svg`
  display: block;
  width: 100%;
  flex: 1;
  min-height: 0;
`;
const Rail = styled.aside`
  display: flex;
  flex-direction: column;
  align-items: center;
  width: 36px;
  padding: 11px 0 0 4px;
  background: #f9fbfb;
`;
const RailButton = styled.button`
  display: flex;
  flex-direction: column;
  align-items: center;
  gap: 4px;
  margin-bottom: 19px;
  padding: 0;
  border: 0;
  background: none;
  font-size: 14px;
`;
const RailLabel = styled.span`
  writing-mode: vertical-rl;
  line-height: 16px;
`;

const range = (a: number, b: number) => Array.from({ length: b - a + 1 }, (_, i) => a + i);
const EDGE = 151;
const gridX = (k: number) => Math.round(998 + k * 80.3 + (k % 1 ? 0.25 : 0));
const gridY = (k: number) => Math.round(783.4 + k * 80.25);

const squares = [
  [624, 557], [699, 557], [774, 557], [795, 557], [624, 728], [699, 728], [774, 728], [734, 769], [774, 769], [795, 769], [834, 769],
  [734, 920], [774, 920], [834, 920], [774, 576], [774, 601], [774, 684], [774, 709],
  [944, 296], [1288, 296], [944, 466], [1288, 466], [944, 371], [1288, 371], [1288, 446], [1041, 506], [1106, 506], [1116, 506],
  [1126, 506], [1191, 506], [1106, 466], [1126, 466],
  [976, 557], [1257, 557], [944, 589], [1288, 589], [944, 643], [944, 697], [1288, 698], [949, 713], [1283, 713], [1051, 883], [1183, 878], [1116, 845],
];
const pluses = [
  [699, 557], [784, 557], [699, 582], [784, 576], [774, 589], [784, 601], [624, 643], [784, 684], [774, 697], [784, 709], [774, 719],
  [699, 703], [699, 728], [774, 738], [795, 738], [754, 769], [784, 769], [814, 769], [734, 844], [834, 844], [754, 920], [804, 920],
  [1116, 296], [944, 333], [944, 381], [1116, 371], [1288, 381], [1288, 408], [1116, 446], [1116, 466], [1041, 486], [1106, 486],
  [1126, 486], [1191, 486], [1079, 506], [1111, 506], [1116, 506],
  [960, 589], [1116, 589], [944, 616], [944, 643], [976, 643], [1257, 643], [1288, 606], [1288, 643], [960, 697], [1116, 697],
];
const crosses = [
  [699, 608], [699, 678], [774, 576], [794, 576], [774, 601], [794, 601], [774, 684], [794, 684], [774, 709], [794, 709], [774, 728],
  [774, 769], [795, 769], [794, 920], [944, 371], [1288, 371], [944, 446], [1288, 446], [1041, 466], [1106, 466], [1126, 466], [1191, 466],
  [1126, 506], [944, 697], [1288, 624], [1288, 698],
];
const rings = [[1257, 557], [944, 589], [1288, 589]];
const holes = [[976, 589], [1257, 589], [976, 697], [1257, 697]];

const Drawing = () => (
  <Canvas shapeRendering="crispEdges" role="img" aria-label="Draft sheet">
    <g transform="translate(0 -244)" fill="none">
      <g stroke="#bcbcbc" strokeDasharray="6 3">
        {range(-11, 20).map((k) => {
          const x = gridX(k + 0.5) + 0.5;
          return x > EDGE ? <path key={k} d={`M${x} 246V2400`} /> : null;
        })}
        {range(-7, 12).map((k) => <path key={k} d={`M${EDGE} ${gridY(k + 0.5) + 0.5}H4000`} />)}
      </g>
      <g stroke={NAVY}>
        {range(-10, 20).map((k) => <path key={k} d={`M${gridX(k) + 0.5} 245V2400`} />)}
        {range(-6, 12).map((k) => <path key={k} d={`M${EDGE} ${gridY(k) + 0.5}H4000`} />)}
      </g>
      <path d={`M998.500 245V2400M${EDGE} 783.500H4000`} stroke="#f00000" />
      <path d="M151.500 245V2400" stroke="#000" />
      <path d="M231 245V2400" stroke="#000" strokeWidth="2" />

      <g stroke="#000" strokeWidth="2">
        <path d="M774 557H624V728H774M699 557V608M699 678V728M774 557V920M794 557V920M794 557L834 769M734 769H834V920H734Z" />
        <circle cx="699.500" cy="643" r="34.500" />
        <path d="M944 296H1288V466H944ZM944 371H1288M944 446H1288M1041 466V506H1191V466M1106 466V506M1126 466V506" />
        <path d="M976 557H1257A32 32 0 0 1 1288 589V698Q1288 706 1283 713L1183 878A75 75 0 0 1 1051 883L949 713Q944 706 944 697V589A32 32 0 0 1 976 557" />
        <circle cx="1116" cy="845" r="45" />
        {holes.map(([x, y]) => <circle key={`${x}-${y}`} cx={x} cy={y} r="12.500" />)}
      </g>
      <path d="M944 589.500H1257M944 697.500H1257M976.500 589V697M1257.500 589V697" stroke={MARK} strokeDasharray="1 7" />

      <g stroke={MARK}>
        {squares.map(([x, y], i) => <path key={i} d={`M${x - 4.5} ${y - 4.5}h10v10h-10z`} />)}
        <path d="M954.500 298V306.500H945M1278.500 373V381.500H1284M1116.500 471V476.500H1125M784 561V586.500H775M784 686V694.500H775" />
        {rings.map(([x, y], i) => <circle key={i} cx={x + 0.5} cy={y + 0.5} r="9" />)}
      </g>
      <g fill={MARK}>
        {[...squares, ...holes].map(([x, y], i) => <rect key={i} x={x - 1} y={y - 1} width="4" height="4" />)}
      </g>
      <g stroke={MARK} strokeWidth="3">
        {pluses.map(([x, y], i) => <path key={i} d={`M${x - 8} ${y + 0.5}h17M${x + 0.5} ${y - 8}v17`} />)}
        {crosses.map(([x, y], i) => <path key={i} d={`M${x - 5.5} ${y - 5}l12 11M${x + 6.5} ${y - 5}l-12 11`} />)}
      </g>
    </g>
  </Canvas>
);

/* ---------- sheet tabs and status bar ---------- */

const SheetBar = styled.div`
  display: flex;
  height: 20px;
  flex: none;
  border-top: 1px solid #000;
  background: #c0c0c0;
`;
const SheetNav = styled.button`
  display: flex;
  align-items: center;
  justify-content: center;
  width: 20px;
  height: 19px;
  padding: 0 4px 0 0;
  border: 1px solid #8a8a8a;
  border-left-color: #fff;
  background: #ececec;
`;
const SheetTab = styled.button`
  position: relative;
  width: 75px;
  height: 19px;
  padding: 0 2px 0 0;
  border: 0;
  background: none;
  font: bold 14px/18px "Liberation Sans", sans-serif;
`;
const AddSheet = styled(SheetTab)`
  width: 40px;
`;
const TabShape = styled.svg`
  position: absolute;
  left: 0;
  top: 0;
  overflow: visible;
`;
const TabText = styled.span`
  position: relative;
`;
const Status = styled.footer`
  display: flex;
  align-items: center;
  justify-content: flex-end;
  height: 26px;
  flex: none;
  padding-right: 5px;
  background: ${TEAL};
  color: #fff;
`;
const StatusText = styled.span`
  margin-right: 154px;
  padding-top: 1px;
  font-size: 14px;
`;
const StatusTools = styled.div`
  display: flex;
  align-items: center;
  gap: 2px;
`;
const ZoomRange = styled.input`
  appearance: none;
  width: 100px;
  height: 20px;
  margin: 0;
  background: linear-gradient(#fff, #fff) center / 100% 1px no-repeat;
  &::-webkit-slider-thumb {
    appearance: none;
    width: 10px;
    height: 14px;
    border: 3px solid #fff;
    border-radius: 0 0 4px 4px;
    background: #f0a154;
  }
`;
const EndTools = styled.div`
  display: flex;
  gap: 10px;
  padding-left: 4px;
`;

const arrows = [
  ["First sheet", "M3 1v10M11 1v10L5 6z"],
  ["Previous sheet", "M9 1v10L3 6z"],
  ["Next sheet", "M3 1v10l6-5z"],
  ["Last sheet", "M9 1v10M1 1v10l6-5z"],
];

export default function App() {
  return (
    <Shell>
      <GlobalStyle />
      <Header>
        <HeaderLeft>
          <QuickBar>
            <Logo>SE</Logo>
            <PlainButton aria-label="New"><Icon name="newDoc" /></PlainButton>
            <PlainButton $w={12} aria-label="New options"><Caret color="#fff" /></PlainButton>
            <PlainButton aria-label="Open"><Icon name="open" /></PlainButton>
            <PlainButton aria-label="Recent"><Icon name="recent" /></PlainButton>
            <PlainButton aria-label="Save"><Icon name="save" /></PlainButton>
            <PlainButton aria-label="Save as"><Icon name="saveAs" /></PlainButton>
            <PlainButton $w={12} aria-label="Save options"><Caret color="#fff" /></PlainButton>
            <PlainButton $w={28} aria-label="Settings"><Icon name="gear" /></PlainButton>
            <PlainButton aria-label="Windows"><Icon name="windows" /></PlainButton>
            <PlainButton $w={8} aria-label="Window options"><Caret color="#fff" /></PlainButton>
            <PlainButton $w={28} aria-label="Close"><Icon name="door" /></PlainButton>
            <PlainButton aria-label="Undo"><Icon name="undo" /></PlainButton>
            <PlainButton $w={12} aria-label="Undo options"><Caret color="#fff" /></PlainButton>
            <PlainButton $w={28} aria-label="Redo"><Icon name="redo" /></PlainButton>
            <PlainButton $w={8} aria-label="Redo options"><Caret color="#fff" /></PlainButton>
            <PlainButton $w={28} aria-label="Undo all"><Icon name="undoAll" /></PlainButton>
            <PlainButton $w={12} aria-label="Customize"><Icon name="custom" /></PlainButton>
          </QuickBar>
          <Tabs>
            <TabButton $file>File</TabButton>
            <TabButton $active>Home</TabButton>
            <TabButton>Tables</TabButton>
            <TabButton>Inspect</TabButton>
            <TabButton>Tools</TabButton>
            <TabButton>View</TabButton>
          </Tabs>
        </HeaderLeft>
        <AppTitle>Solid Edge 2D Drafting 2025 - Draft - [Draft1]</AppTitle>
        <HeaderRight>
          <WindowBar>
            <Brand>SIEMENS</Brand>
            <PlainButton $w={32} aria-label="Minimize"><Icon name="min" /></PlainButton>
            <PlainButton $w={45} aria-label="Restore"><Icon name="restore" /></PlainButton>
            <PlainButton $w={30} aria-label="Close window"><Icon name="close" size={18} /></PlainButton>
          </WindowBar>
          <ToolsBar>
            <SearchBox>
              <SearchInput aria-label="Find tools" placeholder="Type to find tools" />
              <Icon name="search" />
            </SearchBox>
            <PlainButton aria-label="Like"><Icon name="happy" /></PlainButton>
            <PlainButton aria-label="Dislike"><Icon name="sad" /></PlainButton>
            <PlainButton aria-label="Help"><Icon name="help" /></PlainButton>
            <PlainButton $w={18} aria-label="Minimize document"><Icon name="min" size={14} /></PlainButton>
            <PlainButton $w={22} aria-label="Restore document"><Icon name="restore" size={16} /></PlainButton>
            <PlainButton $w={20} aria-label="Close document"><Icon name="close" size={14} /></PlainButton>
          </ToolsBar>
        </HeaderRight>
      </Header>
      <RibbonBar />
      <Work>
        <Main>
          <Prompt>
            <PromptMark><Icon name="bar" /></PromptMark>
            <PromptText>Click elements, drag right for inside fence, drag left for inside/overlapping fence, or Alt+click to place first vertex of polygon fence, or Alt+click+drag for a lasso fence. Press Esc to clear the display of keypoints.</PromptText>
          </Prompt>
          <DocBar>
            <DocTab>
              <Icon name="draft" />
              <DocName>Draft1</DocName>
              <PlainButton $w={20} aria-label="Close Draft1"><Icon name="close" size={16} /></PlainButton>
            </DocTab>
            <DocNav>
              <PlainButton $w={19} aria-label="Scroll left"><Icon name="prev" size={16} /></PlainButton>
              <PlainButton $w={18} aria-label="Scroll right"><Icon name="next" size={16} /></PlainButton>
              <PlainButton $w={17} aria-label="Documents"><Icon name="more" size={16} /></PlainButton>
              <PlainButton $w={20} aria-label="Close all"><Icon name="close" size={20} /></PlainButton>
            </DocNav>
          </DocBar>
          <Drawing />
          <SheetBar>
            {arrows.map(([label, d]) => (
              <SheetNav key={label} aria-label={label}>
                <svg width="12" height="12" viewBox="0 0 12 12" aria-hidden="true"><path d={d} fill="#9a9a9a" stroke="#9a9a9a" /></svg>
              </SheetNav>
            ))}
            <SheetTab>
              <TabShape width="75" height="19" aria-hidden="true"><path d="M0 0l8 18h59L75 0" fill="#fff" stroke="#000" /></TabShape>
              <TabText>Sheet1</TabText>
            </SheetTab>
            <AddSheet aria-label="Add sheet">
              <TabShape width="40" height="19" aria-hidden="true">
                <path d="M0 0l-4 9 4 9h25l8-18z" fill="#fcd3b0" stroke="#000" />
                <path d="M7 5h11v8H7z" fill="#fff" stroke="#00f" /><path d="M10 7h6v4h-6z" fill="#bbb" stroke="#888" />
                <path d="M5 3l6 6M11 3L5 9M8 2v8M4 6h8" stroke="#f00" />
              </TabShape>
            </AddSheet>
          </SheetBar>
        </Main>
        <Rail>
          <RailButton aria-label="Library"><Icon name="library" size={24} /></RailButton>
          <RailButton aria-label="Groups"><Icon name="groups" size={24} /></RailButton>
          <RailButton><Icon name="layers" size={24} /><RailLabel>Layers</RailLabel></RailButton>
        </Rail>
      </Work>
      <Status>
        <StatusText>0 items are selected</StatusText>
        <StatusTools>
          <PlainButton aria-label="Zoom area"><Icon name="zoomArea" size={18} /></PlainButton>
          <PlainButton aria-label="Zoom"><Icon name="zoomPm" size={18} /></PlainButton>
          <PlainButton aria-label="Refresh"><Icon name="brush" size={18} /></PlainButton>
          <PlainButton aria-label="Fit"><Icon name="fit" size={18} /></PlainButton>
          <PlainButton aria-label="Pan"><Icon name="pan" size={18} /></PlainButton>
          <PlainButton aria-label="Zoom out"><Icon name="minus" /></PlainButton>
          <ZoomRange type="range" aria-label="Zoom level" defaultValue={46} />
          <PlainButton aria-label="Zoom in"><Icon name="plusRound" /></PlainButton>
          <EndTools>
            <PlainButton $w={20} aria-label="Video"><Icon name="video" /></PlainButton>
            <PlainButton $w={20} aria-label="Record"><Icon name="record" /></PlainButton>
            <PlainButton $w={20} aria-label="Upload"><Icon name="upload" /></PlainButton>
          </EndTools>
        </StatusTools>
      </Status>
    </Shell>
  );
}
